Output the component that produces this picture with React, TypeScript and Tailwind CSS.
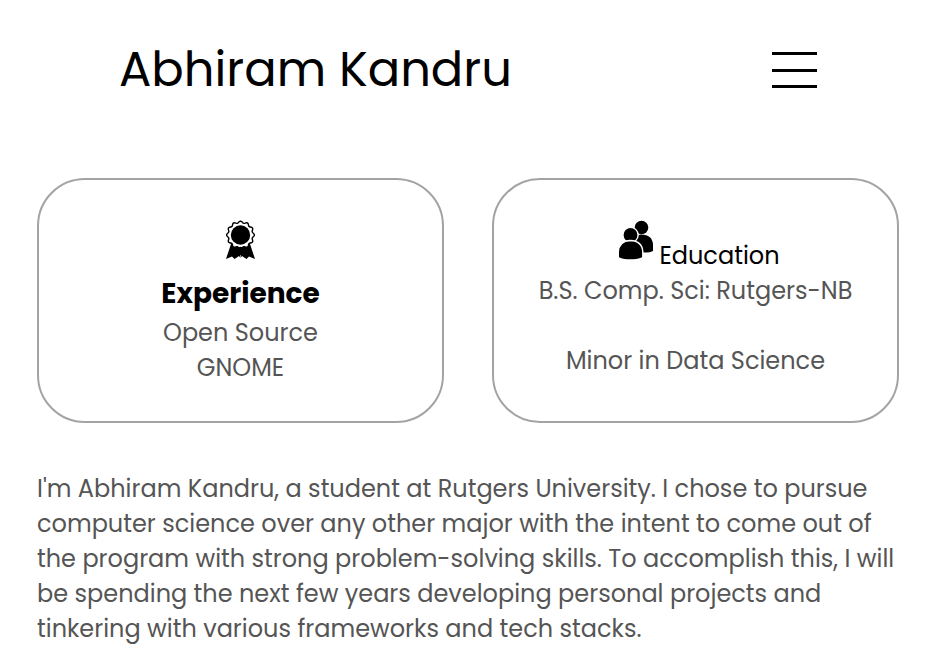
import React from "react";

// Twelve-lobed outline of the rosette, starting from the lobe at the top.
const rosette = Array.from({ length: 120 }, (_, i) => {
  const angle = (i / 120) * Math.PI * 2;
  const radius = 13 + 0.9 * Math.cos(angle * 12);
  return `${(19.5 + radius * Math.sin(angle)).toFixed(2)},${(15 - radius * Math.cos(angle)).toFixed(2)}`;
}).join(" ");

function AwardIcon() {
  return (
    <svg viewBox="0 0 40 40" className="block size-10" aria-hidden="true">
      <path d="M10 24 5 39l6-2.500 2.500 2.500 4.500-3 1.500 2 1.500-2 4.500 3 2.500-2.500 6 2.500-5-15z" />
      <path d="M19.5 35v4" stroke="white" strokeWidth="0.6" />
      <polygon points={rosette} fill="white" stroke="black" strokeWidth="1.4" />
      <path d="M12.500 28.500 19.500 26.800l7 1.700-3 2.500h-8z" />
      <circle cx="19.5" cy="15" r="9.7" />
    </svg>
  );
}

function PeopleIcon() {
  return (
    <svg viewBox="-1 0 42 40" className="h-10 w-[42px]" aria-hidden="true">
      <circle cx="29.5" cy="7.5" r="6.8" />
      <path d="M22 32V20q2-5 7-5.5 11.500 0 12 10.500v6q-3 1.500-7 1.500z" />
      <g stroke="white" strokeWidth="1.4">
        <circle cx="18.500" cy="15" r="7.600" />
        <path d="M6.300 37.500V32q.5-11 12-11.500 12 .5 12.500 11.500v5.500q-4 2.500-12.500 2.500t-12-2.500z" />
      </g>
    </svg>
  );
}

const card =
  "flex-1 rounded-[48px] border-2 border-[#a3a3a3] px-9 pt-10 pb-9 text-center";

export default function App() {
  return (
    <div className="bg-white font-[Poppins,Lato,sans-serif] text-2xl leading-[35px] text-[#555555]">
      <header className="flex items-center justify-between pt-[34px] pr-[120px] pl-[119px] text-black">
        <h1 className="text-5xl leading-[72px]">Abhiram Kandru</h1>
        <button aria-label="Open menu" className="flex h-9 flex-col justify-between">
          <span className="h-[3px] w-[45px] bg-black" />
          <span className="h-[3px] w-[45px] bg-black" />
          <span className="h-[3px] w-[45px] bg-black" />
        </button>
      </header>
      <main className="pt-[72px] pr-[38px] pl-[37px]">
        <div className="flex gap-12">
          <section className={card}>
            <div className="flex justify-center">
              <AwardIcon />
            </div>
            <h2 className="pt-4 pb-1 text-[28px] leading-[35px] font-bold text-black">Experience</h2>
            <p>Open Source</p>
            <p>GNOME</p>
          </section>
          <section className={card}>
            <h2 className="flex justify-center gap-1.5 text-black">
              <PeopleIcon />
              <span className="pt-[18px]">Education</span>
            </h2>
            <p>B.S. Comp. Sci: Rutgers-NB</p>
            <p className="mt-[35px]">Minor in Data Science</p>
          </section>
        </div>
        <p className="mt-12">
          I'm Abhiram Kandru, a student at Rutgers University. I chose to pursue
          computer science over any other major with the intent to come out of
          the program with strong problem-solving skills. To accomplish this, I
          will be spending the next few years developing personal projects and
          tinkering with various frameworks and tech stacks.
        </p>
      </main>
    </div>
  );
}
